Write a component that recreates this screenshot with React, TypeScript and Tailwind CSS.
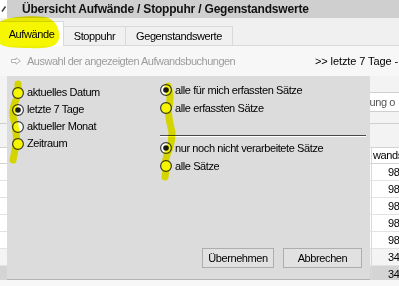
import React from "react";

function Radio({ checked }: { checked?: boolean }) {
  return (
    <svg width="12" height="12" viewBox="0 0 12 12" className="shrink-0">
      <circle cx="6" cy="6" r="5.4" fill="#ffffff" stroke="#3a3a3a" strokeWidth="1.2" />
      {checked && <circle cx="6" cy="6" r="2.8" fill="#1a1a1a" />}
    </svg>
  );
}

function RadioRow({ label, checked, h }: { label: string; checked?: boolean; h: string }) {
  return (
    <div className={`flex items-center gap-[3px] ${h}`}>
      <Radio checked={checked} />
      <span className="whitespace-nowrap">{label}</span>
    </div>
  );
}

export default function App() {
  const rows = [
    { v: "98,00", bg: "bg-white" },
    { v: "98,00", bg: "bg-white" },
    { v: "98,00", bg: "bg-white" },
    { v: "98,00", bg: "bg-white" },
    { v: "98,00", bg: "bg-white" },
    { v: "34,00", bg: "bg-[#f4f4f4]" },
    { v: "34,00", bg: "bg-[#d4d4d4]" },
  ];
  return (
    <div className="relative w-[399px] h-[286px] overflow-hidden bg-[#f5f5f5] font-['Liberation_Sans',Arial,sans-serif] text-[11px] tracking-[-0.4px] text-black flex flex-col">
      {/* title bar */}
      <div className="flex h-[18px] shrink-0">
        <div className="w-[7px] bg-white">
          <svg width="7" height="18" viewBox="0 0 7 18">
            <line x1="2" y1="11.5" x2="5.5" y2="6.5" stroke="#444" strokeWidth="1.6" />
          </svg>
        </div>
        <div className="flex-1 bg-[#cfcfcf] flex items-center pl-[15px] font-bold text-[12px] tracking-[-0.2px] whitespace-nowrap text-[#111]">
          Übersicht Aufwände / Stoppuhr / Gegenstandswerte
        </div>
      </div>

      {/* tabs */}
      <div className="flex items-end h-[28px] shrink-0 bg-[#f0f0f0] border-b border-[#d9d9d9]">
        <div className="w-[64px] h-[25px] -mb-px bg-white border-t border-r border-[#d9d9d9] flex items-center justify-center">
          Aufwände
        </div>
        <div className="w-[62px] h-[19px] bg-[#f0f0f0] border border-b-0 border-l-0 border-[#d9d9d9] flex items-center justify-center">
          Stoppuhr
        </div>
        <div className="w-[107px] h-[19px] bg-[#f0f0f0] border border-b-0 border-l-0 border-[#d9d9d9] flex items-center justify-center">
          Gegenstandswerte
        </div>
      </div>

      {/* filter row */}
      <div className="grid grid-cols-[315px_1fr] h-[30px] shrink-0 items-center bg-[#f7f7f7]">
        <div className="flex items-center pl-[11px] gap-[6px] text-[#9c9c9c] whitespace-nowrap tracking-[-0.5px]">
          <svg width="10" height="8" viewBox="0 0 10 8">
            <path d="M0.5 2.5 H5 V0.8 L9.3 4 L5 7.2 V5.5 H0.5 Z" fill="#fff" stroke="#a8a8a8" strokeWidth="0.9" />
          </svg>
          <span>Auswahl der angezeigten Aufwandsbuchungen</span>
        </div>
        <div className="whitespace-nowrap overflow-hidden tracking-[-0.1px]">&gt;&gt; letzte 7 Tage - alle</div>
      </div>

      {/* content behind popup */}
      <div className="flex-1 flex flex-col bg-[#f3f3f3] overflow-hidden">
        <div className="h-[16px] shrink-0" />
        <div className="h-[20px] shrink-0 ml-[300px] w-[119px] bg-white border border-[#cfcfcf] flex items-center justify-end pr-[23px] whitespace-nowrap overflow-hidden text-[#555]">
          ung o
        </div>
        <div className="h-[12px] shrink-0 border-b border-[#d0d0d0]" />
        <div className="h-[23px] shrink-0" />
        <div className="flex h-[17px] shrink-0 bg-white border-t border-b border-[#d3d3d3]">
          <div className="flex-1" />
          <div className="w-[28px] border-l border-[#d9d9d9] flex items-center pl-[1px] overflow-hidden whitespace-nowrap">
            wands
          </div>
        </div>
        {rows.map((r, i) => (
          <div key={i} className={`flex h-[17px] shrink-0 border-b border-[#e3e3e3] ${r.bg}`}>
            <div className="flex-1" />
            <div className="w-[28px] border-l border-[#d9d9d9] flex items-center pl-[16px] overflow-hidden whitespace-nowrap">
              {r.v}
            </div>
          </div>
        ))}
      </div>
      <div className="h-[6px] shrink-0 bg-[#f7f7f7]" />

      {/* popup panel */}
      <div className="absolute left-[7px] top-[76px] w-[363px] h-[204px] bg-[#dcdcdc] border-b border-[#b4b4b4] flex flex-col">
        <div className="grid grid-cols-[153px_1fr]">
          <div className="pt-[8px] pl-[5px] flex flex-col">
            <RadioRow label="aktuelles Datum" h="h-[17px]" />
            <RadioRow label="letzte 7 Tage" checked h="h-[17px]" />
            <RadioRow label="aktueller Monat" h="h-[17px]" />
            <RadioRow label="Zeitraum" h="h-[17px]" />
          </div>
          <div className="pt-[5px] flex flex-col">
            <RadioRow label="alle für mich erfassten Sätze" checked h="h-[18px]" />
            <RadioRow label="alle erfassten Sätze" h="h-[18px]" />
            <div className="mt-[18px] w-[206px] h-[2px] border-t border-[#4a4a4a] border-b border-b-white" />
            <div className="mt-[2px]" />
            <RadioRow label="nur noch nicht verarbeitete Sätze" checked h="h-[18px]" />
            <RadioRow label="alle Sätze" h="h-[18px]" />
          </div>
        </div>
        <div className="mt-auto flex justify-end gap-[9px] pr-[8px] pb-[11px]">
          <button className="w-[72px] h-[20px] bg-[#e1e1e1] border border-[#adadad] flex items-center justify-center">
            Übernehmen
          </button>
          <button className="w-[79px] h-[20px] bg-[#e1e1e1] border border-[#adadad] flex items-center justify-center">
            Abbrechen
          </button>
        </div>
      </div>

      {/* yellow highlighter marks */}
      <svg
        className="absolute left-0 top-0 pointer-events-none mix-blend-multiply"
        width="399"
        height="286"
        viewBox="0 0 399 286"
      >
        <g fill="#f6f600" stroke="none">
          <path d="M0,22 C5,17 30,15 45,17 C55,19 60,28 59,38 C58,46 50,49 30,48 C15,48 2,47 0,44 Z" />
          <circle cx="18" cy="92" r="5.2" />
          <circle cx="18" cy="144" r="5.2" />
          <circle cx="166" cy="108" r="5.2" />
          <circle cx="166" cy="166" r="5.2" />
        </g>
        <g fill="none" stroke="#f6f600" strokeLinecap="round" strokeLinejoin="round">
          <path d="M18,84 Q19,92 16,100 Q12,108 13,116 Q15,124 16,132 Q17,142 15,150 L13,160" strokeWidth="7" />
          <path d="M168,86 Q172,98 168,110 Q169,122 172,132 Q172,142 169,150 Q164,160 166,170 L165,177" strokeWidth="7" />
        </g>
      </svg>
    </div>
  );
}
